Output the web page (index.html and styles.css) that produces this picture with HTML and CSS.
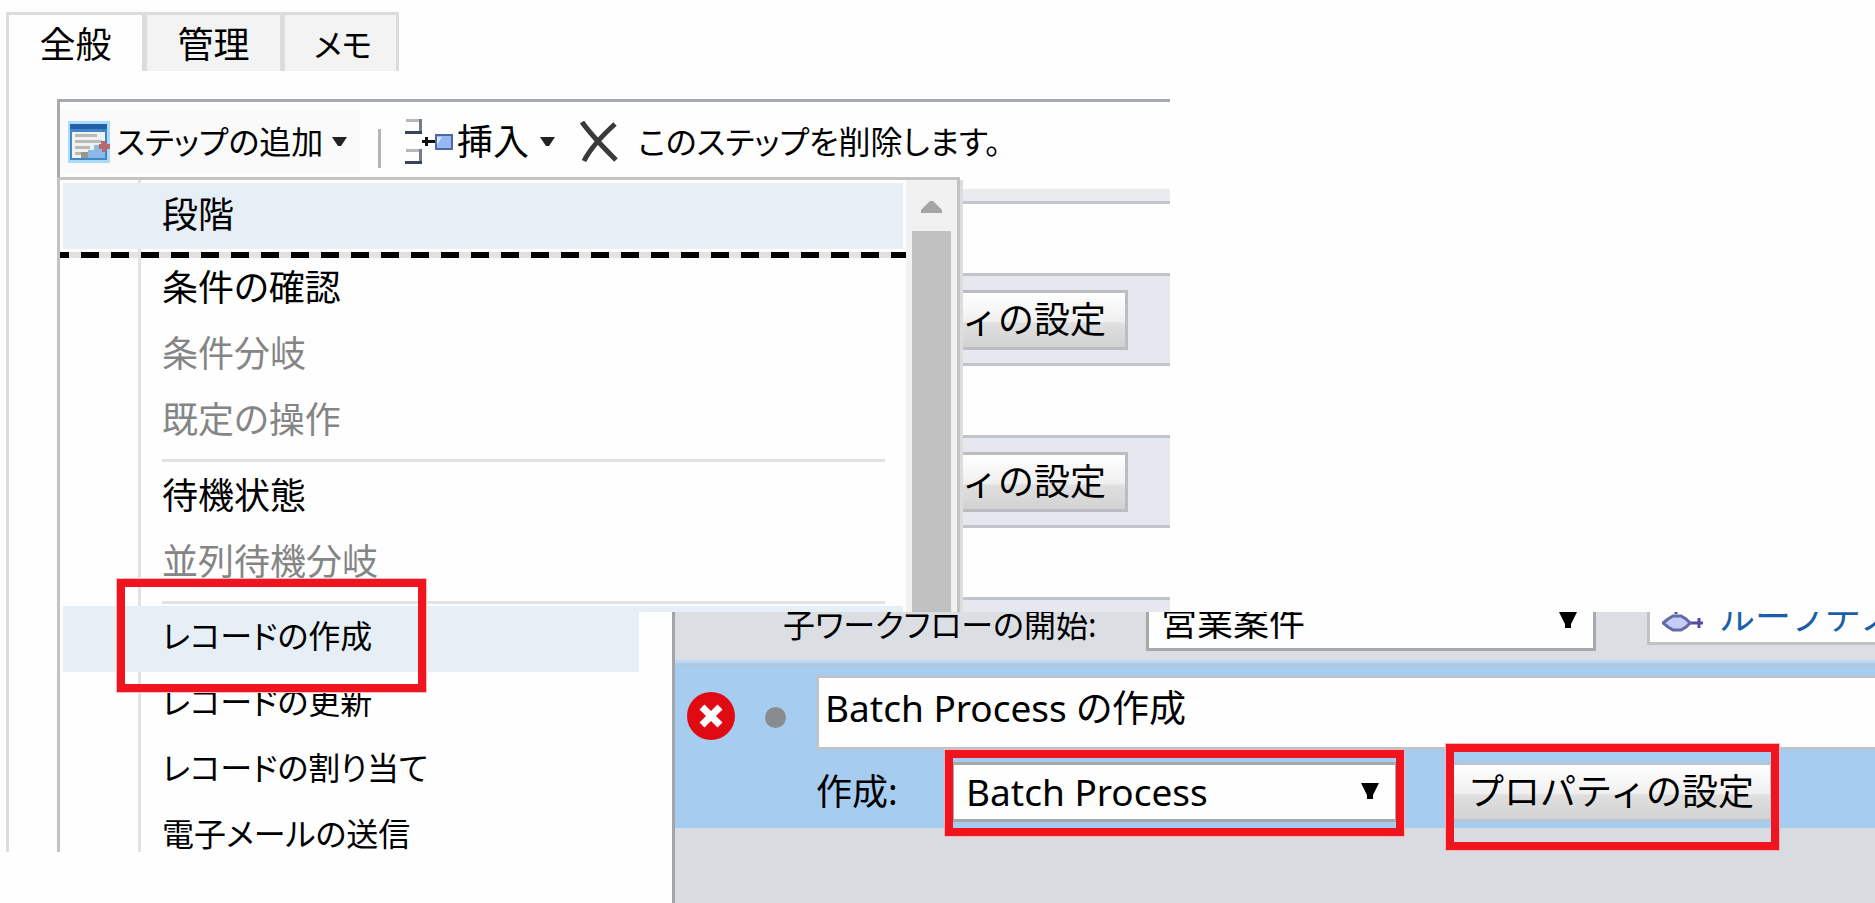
FILE: index.html
```html
<!DOCTYPE html>
<html lang="ja">
<head>
<meta charset="utf-8">
<title>ワークフロー</title>
<link rel="stylesheet" href="styles.css">
</head>
<body>
<div class="page">
  <main class="form">
    <nav class="tabs">
      <button class="tab tab-active" type="button">全般</button>
      <button class="tab" type="button">管理</button>
      <button class="tab tab-last" type="button">メモ</button>
    </nav>
    <section class="editor">
      <div class="toolbar">
        <button class="tool tool-add" type="button">
          <svg width="42" height="42" viewBox="0 0 42 42" aria-hidden="true">
            <rect width="42" height="42" fill="#a9dcfb"/>
            <rect x="2" y="3" width="37" height="36" fill="#3f87c9"/>
            <rect x="2" y="3" width="37" height="5" fill="#2360a8"/>
            <rect x="4" y="11" width="33" height="26" fill="#f1f1ee"/>
            <path d="M7 14.500h22M7 20.500h27M7 26.500h15M7 32.500h8" stroke="#b9b9b7" stroke-width="3"/>
            <path d="M20 29h6v-5h11v13H14v-5h6z" fill="#8db9e6"/>
            <path d="M13 31h7v6h-7z" fill="#929b8f"/>
            <path d="M33 20h5v3h4v5h-4v3h-4v-3h-3v-5h2z" fill="#b96a70"/>
          </svg>
          <span>ステップの追加</span>
          <svg class="caret" width="15" height="9" viewBox="0 0 15 9" aria-hidden="true"><path d="M0 0h15L9 9H6z" fill="#222"/></svg>
        </button>
        <span class="divider"></span>
        <button class="tool tool-insert" type="button">
          <svg width="51" height="46" viewBox="0 0 51 46" aria-hidden="true">
            <path d="M2 1.500h15M2 31.500h15" stroke="#b5b7bd" stroke-width="3"/>
            <path d="M16.500 0v15M16.500 30v15" stroke="#747a8c" stroke-width="3"/>
            <path d="M1 13.500h17M1 43.500h17" stroke="#3c425a" stroke-width="3"/>
            <path d="M18 22.500h13M22.500 18v9" stroke="#111" stroke-width="3"/>
            <rect x="32" y="16" width="16" height="14" fill="#98b7f5" stroke="#5068a0" stroke-width="2"/>
            <path d="M33 26l5-8h-5z" fill="#dce7ff"/>
          </svg>
          <span class="insert-text">挿入</span>
          <svg class="caret" width="15" height="9" viewBox="0 0 15 9" aria-hidden="true"><path d="M0 0h15L9 9H6z" fill="#222"/></svg>
        </button>
        <button class="tool tool-delete" type="button">
          <svg width="39" height="42" viewBox="0 0 39 42" aria-hidden="true">
            <path d="M3 1C10 11 25 27 37 39M36 3C25 13 12 26 5 40" fill="none" stroke="#3a3a3a" stroke-width="5"/>
          </svg>
          <span>このステップを削除します。</span>
        </button>
      </div>
      <div class="steps">
        <div class="steps-head"></div>
        <div class="step"><button class="prop" type="button">プロパティの設定</button></div>
        <div class="step"><button class="prop" type="button">プロパティの設定</button></div>
        <div class="step"></div>
      </div>
      <div class="menu">
        <ul class="menu-list">
          <li class="item item-hot">段階</li>
          <li class="dash"></li>
          <li class="item">条件の確認</li>
          <li class="item item-off">条件分岐</li>
          <li class="item item-off">既定の操作</li>
          <li class="rule"></li>
          <li class="item">待機状態</li>
          <li class="item item-off">並列待機分岐</li>
          <li class="rule"></li>
          <li class="item item-kana item-hot item-marked">レコードの作成</li>
          <li class="item item-kana">レコードの更新</li>
          <li class="item item-kana">レコードの割り当て</li>
          <li class="item item-kana">電子メールの送信</li>
        </ul>
        <div class="scrollbar">
          <svg width="21" height="12" viewBox="0 0 21 12" aria-hidden="true"><path d="M9 0h3l9 9v3H0V9z" fill="#a5a5a5"/></svg>
          <div class="thumb"></div>
        </div>
      </div>
    </section>
  </main>

  <section class="pane">
    <div class="pane-body">
      <div class="child-row">
        <label class="child-label" for="child">子ワークフローの開始:</label>
        <div class="pick pick-child">
          <select id="child"><option>営業案件</option></select>
          <svg class="arrow" width="18" height="18" viewBox="0 0 18 18" aria-hidden="true"><path d="M0 1h18l-6 12v4H6v-4z" fill="#000"/></svg>
        </div>
        <div class="lookup">
          <svg width="42" height="42" viewBox="0 0 42 42" aria-hidden="true">
            <path d="M14 8v12M9 13h10M28 29h13M37 24v10" stroke="#554ba0" stroke-width="3"/>
            <path d="M1 29l5-4 5-3h8l5 3 4 4-4 4-5 3h-8l-5-3z" fill="#c3cdf8" stroke="#626ba5" stroke-width="3"/>
          </svg>
          <a href="#">ループテスト</a>
        </div>
      </div>
      <div class="active-step">
        <svg class="error" width="50" height="50" viewBox="0 0 50 50" aria-hidden="true">
          <circle cx="25" cy="25" r="24" fill="#e00a12"/>
          <path d="M16 16l18 18M34 16L16 34" stroke="#fff" stroke-width="7"/>
        </svg>
        <span class="bullet"></span>
        <div class="fields">
          <input class="desc" type="text" value="Batch Process の作成" aria-label="説明">
          <div class="create">
            <label class="create-label" for="entity">作成:</label>
            <div class="pick pick-entity">
              <select id="entity"><option>Batch Process</option></select>
              <svg class="arrow" width="18" height="18" viewBox="0 0 18 18" aria-hidden="true"><path d="M0 1h18l-6 12v4H6v-4z" fill="#000"/></svg>
            </div>
            <div class="prop-mark"><button class="prop" type="button">プロパティの設定</button></div>
          </div>
        </div>
      </div>
    </div>
  </section>
</div>
</body>
</html>
```
FILE: styles.css
```css
*, *::after { box-sizing: border-box; }

body {
  margin: 0;
  background: #fefefe;
  color: #000;
  font-family: "Noto Sans", "Noto Sans CJK JP", sans-serif;
  font-size: 36px;
  line-height: 48px;
  font-feature-settings: "palt";
}

button, input, select {
  margin: 0;
  padding: 0;
  border: 0;
  border-radius: 0;
  color: inherit;
  font: inherit;
  font-feature-settings: inherit;
}

svg { display: block; flex: none; }

.page {
  position: relative;
  display: flex;
  height: 100vh;
  padding: 12px 0 51px 6px;
  overflow: hidden;
}

.form {
  display: flex;
  flex-direction: column;
  width: 1164px;
  border-left: 3px solid #dcdcdc;
}

/* Tabs */
.tabs {
  display: flex;
  align-self: flex-start;
  border-top: 3px solid #dcdcdc;
}

.tab {
  width: 138px;
  height: 56px;
  padding-top: 3px;
  border-right: 5px solid #dcdcdc;
  background: #f3f3f3;
}

.tab-active { background: #fefefe; }

.tab-last {
  width: 114px;
  padding-left: 5px;
  border-right-width: 3px;
  font-size: 32px;
}

/* Editor */
.editor {
  position: relative;
  display: flex;
  flex: 1;
  flex-direction: column;
  margin: 28px 0 0 48px;
  border-top: 3px solid #a6a9ad;
  border-left: 3px solid #a6a9ad;
}

.toolbar {
  display: flex;
  align-items: center;
  height: 75px;
  padding-top: 4px;
  font-size: 32px;
}

.tool {
  display: flex;
  align-items: center;
  height: 66px;
  background: none;
  white-space: nowrap;
}

.tool-add {
  width: 300px;
  padding-left: 8px;
  gap: 6px;
  background: #fafafb;
}

.caret { margin-left: 3px; }

.divider {
  width: 3px;
  height: 39px;
  margin: 14px 23px 0 18px;
  background: #b4b4b4;
}

.tool-insert { gap: 2px; }
.tool-insert .caret { margin-left: 9px; }
.insert-text { font-size: 36px; }

.tool-delete {
  margin-left: 24px;
  gap: 20px;
}

.steps {
  display: flex;
  flex-direction: column;
  gap: 69px;
  padding-top: 12px;
}

.steps-head {
  height: 15px;
  border-bottom: 3px solid #c1c4c8;
  background: #e9ebed;
}

.step {
  display: flex;
  align-items: center;
  justify-content: flex-end;
  height: 93px;
  padding-right: 42px;
  border: solid #c1c4ca;
  border-width: 3px 0;
  background: #e5e9ef;
}

.prop {
  width: 324px;
  height: 60px;
  border: 3px solid #bbbdc1;
  background: linear-gradient(#ffffff, #efefef 54%, #e0e0e0 55%, #d2d2d2);
  font-feature-settings: normal;
  line-height: 48px;
  white-space: nowrap;
}

.step .prop { padding-right: 6px; }

/* Drop-down menu */
.menu {
  position: absolute;
  top: 75px;
  bottom: 0;
  left: -3px;
  display: flex;
  width: 903px;
  border: solid #c3c3c3;
  border-width: 3px 3px 0;
  background: #fefefe;
  box-shadow: 3px 3px 0 #dddddd;
  clip-path: inset(0 -3px 0 0);
}

.menu-list {
  flex: 1;
  margin: 0;
  padding: 3px 0 0;
  overflow: hidden;
  background: linear-gradient(to right, transparent 78px, #e2e2e2 78px, #e2e2e2 81px, transparent 81px);
  list-style: none;
}

.item {
  height: 66px;
  margin: 0 3px;
  padding: 8px 0 0 99px;
}

.item-hot { background: #e6eef6; }
.item-off { color: #858585; }

.item-kana {
  padding-top: 6px;
  font-size: 32px;
}

.dash {
  height: 6px;
  margin: 3px 0 -2px;
  background: linear-gradient(to right, #000 18px, #e2e2e2 18px) -9px 0 / 30px 6px;
}

.rule {
  height: 3px;
  margin: 5px 21px 2px 102px;
  background: #e2e2e2;
}

.item-marked { position: relative; }

.item-marked::after {
  content: "";
  position: absolute;
  top: -27px;
  bottom: -20px;
  left: 54px;
  width: 309px;
  border: 8px solid #f0141f;
  outline: 1px solid #ffb9bd;
}

.scrollbar {
  display: flex;
  flex-direction: column;
  align-items: center;
  width: 51px;
  padding-top: 21px;
  gap: 18px;
  background: #f1f1f1;
}

.thumb {
  flex: 1;
  width: 39px;
  background: #c1c1c1;
}

/* Lower pane, laid over the editor */
.pane {
  position: absolute;
  top: 612px;
  right: 0;
  bottom: 0;
  left: 639px;
  padding-left: 33px;
  overflow: hidden;
  background: #fefefe;
}

.pane-body {
  height: 100%;
  border-left: 3px solid #a2a6aa;
  background: #d8dce1;
}

.child-row {
  display: flex;
  align-items: flex-end;
  height: 51px;
  padding: 0 0 9px 108px;
  border-bottom: 3px solid #b9daf8;
  background: #dbdee3;
  white-space: nowrap;
}

.child-label {
  flex: none;
  width: 363px;
  height: 50px;
  font-size: 32px;
}

.pick {
  position: relative;
  flex: none;
  height: 60px;
}

.pick select {
  width: 100%;
  height: 100%;
  padding: 0 0 0 12px;
  border: 3px solid #a7a9ab;
  background: #fefefe;
  appearance: none;
}

.arrow {
  position: absolute;
  top: 20px;
  right: 19px;
  pointer-events: none;
}

.pick-child { width: 450px; }
.pick-child select { padding-top: 4px; }

.lookup {
  display: flex;
  flex: none;
  align-items: center;
  width: 400px;
  height: 60px;
  margin: 0 0 6px 51px;
  padding-left: 12px;
  gap: 15px;
  border: 3px solid #c0c2c6;
  background: #fefefe;
}

.lookup a {
  padding-top: 4px;
  color: #1a5fa8;
  font-feature-settings: normal;
  text-decoration: none;
}

.active-step {
  display: flex;
  align-items: flex-start;
  height: 165px;
  border-top: 3px solid #b3c7da;
  background: #a6cdf0;
}

.error { margin: 25px 0 0 11px; }

.bullet {
  width: 21px;
  height: 21px;
  margin: 41px 0 0 29px;
  border-radius: 50%;
  background: #888c90;
}

.fields {
  flex: 1;
  margin: 9px 0 0 30px;
}

.desc {
  display: block;
  width: 100%;
  height: 75px;
  padding: 0 0 14px 6px;
  border: 3px solid #b8c4ce;
  border-right: 0;
  background: #fefefe;
  font-size: 37px;
}

.create {
  display: flex;
  align-items: center;
  height: 84px;
}

.create-label {
  width: 135px;
}

.pick-entity {
  width: 447px;
  font-size: 37px;
}

.prop-mark {
  position: relative;
  margin-left: 51px;
}

.prop-mark .prop {
  display: block;
  border-color: #b4c6d4;
}

.pick-entity::after,
.prop-mark::after {
  content: "";
  position: absolute;
  inset: -12px -6px -14px;
  border: 8px solid #f0141f;
  outline: 1px solid #ffb0b8;
  pointer-events: none;
}

.prop-mark::after { inset: -18px -6px -28px -3px; }
```
